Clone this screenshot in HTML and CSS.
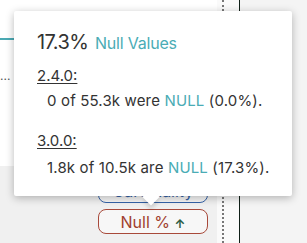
FILE: index.html
```html
<!DOCTYPE html>
<html lang="en">
<head>
    <meta charset="UTF-8">
    <title>Null values</title>
    <link rel="stylesheet" href="styles.css">
</head>
<body>
    <div class="board">
        <!-- left column: chart card + metric buttons -->
        <div class="main-col">
            <div class="card">
                <div class="teal-line"></div>
                <div class="dots">...</div>
            </div>
            <div class="metric-btns">
                <button class="metric cardinality">Cardinality</button>
                <button class="metric nulls">Null % <span class="up">&#8593;</span></button>
            </div>
        </div>
        <div class="gutter"><div class="dotted"></div></div>
        <div class="side"></div>
    </div>

    <!-- tooltip over the board -->
    <div class="tooltip">
        <h2><span class="big">17.3%</span> <span class="teal">Null Values</span></h2>
        <div class="version">
            <div class="ver">2.4.0:</div>
            <p>0 of 55.3k were <span class="teal">NULL</span> (0.0%).</p>
        </div>
        <div class="version">
            <div class="ver">3.0.0:</div>
            <p>1.8k of 10.5k are <span class="teal">NULL</span> (17.3%).</p>
        </div>
    </div>
</body>
</html>
```

FILE: styles.css
```css
* {
    margin: 0;
    padding: 0;
    box-sizing: border-box;
}

body {
    font-family: 'Inter', sans-serif;
    width: 307px;
    height: 243px;
    overflow: hidden;
    background: #f4f4f4;
    color: #333;
    position: relative;
}

.board {
    display: flex;
    height: 243px;
}

.main-col {
    width: 217px;
    display: flex;
    flex-direction: column;
    background: #f0f0f0;
}

.card {
    height: 166px;
    background: #fff;
    padding-top: 38px;
}

.teal-line {
    width: 40px;
    height: 2px;
    background: #4aa9b3;
}

.dots {
    margin-top: 30px;
    font-size: 12px;
    color: #555;
    line-height: 12px;
}

.metric-btns {
    display: flex;
    flex-direction: column;
    gap: 6px;
    padding: 12px 0 0 98px;
}

.metric {
    width: 110px;
    height: 25px;
    border-radius: 8px;
    background: #f7f7f7;
    font-family: 'Inter', sans-serif;
    font-size: 16px;
    font-weight: 400;
}

.cardinality {
    border: 1.5px solid #3563a8;
    color: #3563a8;
}

.nulls {
    border: 1.5px solid #a8493a;
    color: #a0402e;
}

.up {
    color: #2d5e45;
    font-size: 12px;
    font-weight: 700;
}

.gutter {
    width: 23px;
    background: #fafafa;
    border-right: 1.5px solid #102018;
}

.dotted {
    margin: 0 0 0 5px;
    height: 100%;
    border-left: 2px dotted #777;
}

.side {
    flex: 1;
    background: #f4f4f4;
}

.tooltip {
    position: absolute;
    left: 14px;
    top: 11px;
    width: 278px;
    height: 185px;
    background: #fff;
    border-radius: 2px;
    box-shadow: 0 2px 8px rgba(0, 0, 0, 0.28);
    padding: 18px 0 0 23px;
}

.tooltip::after {
    content: "";
    position: absolute;
    left: 131px;
    bottom: -7px;
    width: 12px;
    height: 12px;
    background: #fff;
    transform: rotate(45deg);
    box-shadow: 3px 3px 4px rgba(0, 0, 0, 0.12);
}

.tooltip h2 {
    font-weight: 400;
    line-height: 24px;
}

.big {
    font-size: 20px;
    letter-spacing: -0.6px;
}

.teal {
    color: #4aacb5;
}

h2 .teal {
    font-size: 16px;
    letter-spacing: -0.2px;
}

.version {
    margin-top: 11px;
    font-size: 15px;
    line-height: 20px;
}

.version + .version {
    margin-top: 20px;
}

.ver {
    text-decoration: underline;
    text-underline-offset: 2px;
}

.version p {
    margin-top: 5px;
    padding-left: 10px;
    letter-spacing: 0.15px;
}

.version + .version p {
    margin-top: 7px;
}
```
